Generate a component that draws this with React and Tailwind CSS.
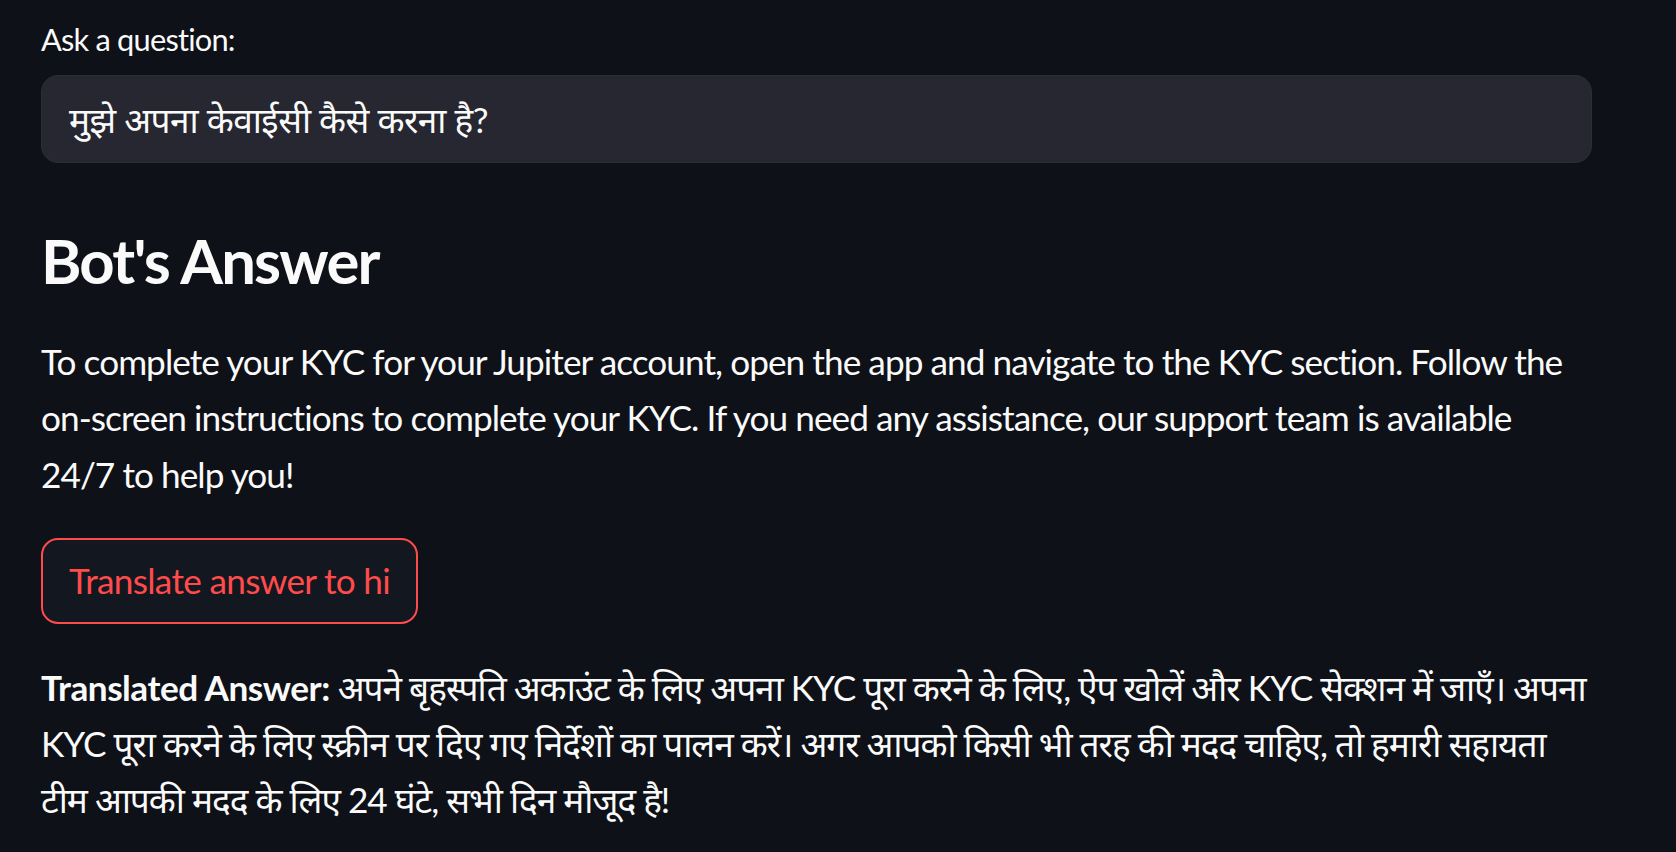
export default function App() {
  const font = { fontFamily: "Lato, 'Noto Sans Devanagari', 'Noto Sans', sans-serif" };
  return (
    <div className="min-h-screen w-full bg-[#0e1117] text-[#fafafa]" style={font}>
      <div className="w-[1551px] pl-[41px] pt-[15px] box-content">
        <label className="block text-[30.8px] leading-[49px] tracking-[-0.8px]">Ask a question:</label>
        <div className="mt-[11px] flex h-[88px] items-center rounded-[17px] border border-[#2c2d37] bg-[#262730] px-[27px] text-[35.2px] tracking-[-0.5px]">
          मुझे अपना केवाईसी कैसे करना है?
        </div>

        <h3 className="mt-[60px] text-[61.6px] font-bold leading-[74px] tracking-[-1.8px]">Bot's Answer</h3>

        <p className="mt-[36px] text-[35.2px] leading-[56.3px] tracking-[-0.95px]">
          To complete your KYC for your Jupiter account, open the app and navigate to the KYC section. Follow the on-screen instructions to complete your KYC. If you need any assistance, our support team is available 24/7 to help you!
        </p>

        <button className="mt-[36px] h-[86px] w-[377px] rounded-[17px] border-2 border-[#ff4b4b] bg-[#131720] text-[35.2px] tracking-[-0.7px] text-[#ff4b4b]">
          Translate answer to hi
        </button>

        <p className="mt-[35px] text-[35.2px] leading-[56.3px] tracking-[-1px]">
          <span className="font-bold tracking-[-0.5px]">Translated Answer:</span> अपने बृहस्पति अकाउंट के लिए अपना KYC पूरा करने के लिए, ऐप खोलें और KYC सेक्शन में जाएँ। अपना KYC पूरा करने के लिए स्क्रीन पर दिए गए निर्देशों का पालन करें। अगर आपको किसी भी तरह की मदद चाहिए, तो हमारी सहायता टीम आपकी मदद के लिए 24 घंटे, सभी दिन मौजूद है!
        </p>
      </div>
    </div>
  );
}
